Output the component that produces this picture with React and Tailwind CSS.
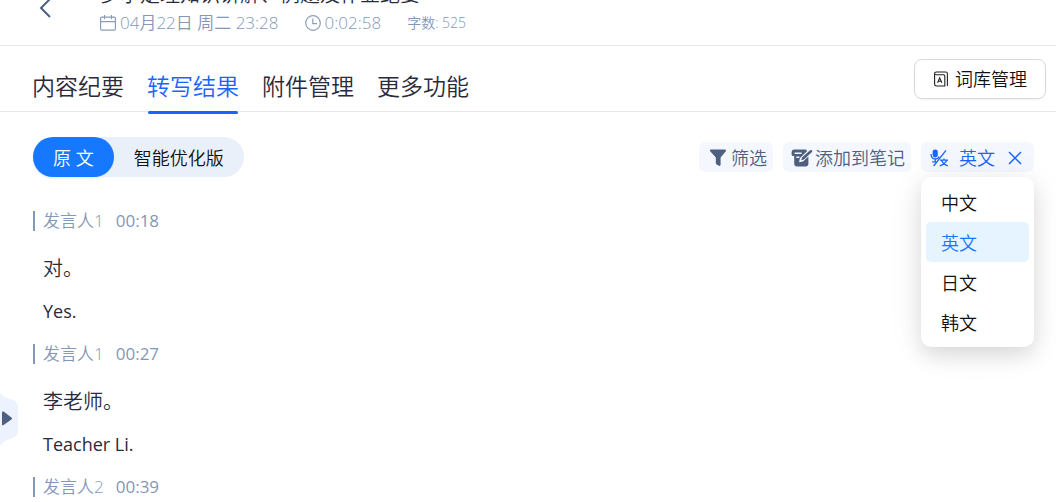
import React, { useState } from 'react'

const tabs = ['内容纪要', '转写结果', '附件管理', '更多功能']
const languages = ['中文', '英文', '日文', '韩文']

const segments = [
  { speaker: '发言人1', time: '00:18', text: '对。', translation: 'Yes.' },
  { speaker: '发言人1', time: '00:27', text: '李老师。', translation: 'Teacher Li.' },
  { speaker: '发言人2', time: '00:39' },
]

function BackIcon() {
  return (
    <svg width="14" height="22" viewBox="0 0 14 22" fill="none" stroke="#4d6080" strokeWidth="2">
      <path d="M12 2 L3 11 L12 20" />
    </svg>
  )
}

function CalendarIcon() {
  return (
    <svg width="16" height="16" viewBox="0 0 16 16" fill="none" stroke="#8c9dba" strokeWidth="1.2">
      <rect x="0.6" y="2.1" width="14.8" height="13" rx="1" />
      <path d="M0.6 6.6 H15.4 M4.5 0 V4.2 M11.5 0 V4.2" />
    </svg>
  )
}

function ClockIcon() {
  return (
    <svg width="16" height="16" viewBox="0 0 16 16" fill="none" stroke="#8c9dba" strokeWidth="1.2">
      <circle cx="8" cy="8" r="7.3" />
      <path d="M7.8 3.6 V8.6 H12" />
    </svg>
  )
}

function DictionaryIcon() {
  return (
    <svg width="16" height="16" viewBox="0 0 16 16" fill="none" stroke="#222" strokeWidth="1.1">
      <path d="M1.6 2.6 V13 Q1.6 15 3.4 15 H11.8 V5.4 Q11.8 3.8 10.4 3.8 H3.2 Q1.6 3.8 1.6 2.4 Q1.6 1 3.4 1 H12.6 Q14.4 1 14.4 2.8 V15" />
      <path d="M4.6 11.8 L6.7 6.8 L8.8 11.8 M5.3 10.2 H8.1" />
    </svg>
  )
}

function FilterIcon() {
  return (
    <svg width="18" height="18" viewBox="0 0 18 18" fill="#4d6080">
      <path d="M1.6 0.6 H16.2 Q17.4 0.8 16.8 2.2 L11.6 8.4 V15.6 Q11.4 17.2 9.8 16.8 L7.4 15.2 Q6.8 14.8 6.8 14 V8.4 L1.2 2.2 Q0.4 0.8 1.6 0.6 Z" />
    </svg>
  )
}

function NoteIcon() {
  return (
    <svg width="22" height="18" viewBox="0 0 22 18">
      <path
        fill="#4d6080"
        d="M3 0.5 H14.4 Q16 0.6 16 2.2 L9 9 L8 13.2 L12 12.4 L17.4 7.4 V14.6 Q17.4 17.5 14.6 17.5 H6.2 Q3.2 17.5 3.2 14.6 V7 H2.2 Q0.6 7 0.6 5.4 V3 Q0.6 0.5 3 0.5 Z"
      />
      <path stroke="#f4f8fe" strokeWidth="1.4" d="M3.6 4.2 H10.6 M5.4 8.2 H8.4" />
      <path fill="#4d6080" d="M20.4 1 Q22 1.6 21 3 L13 10.4 L10.2 11.2 L11 8.6 L18.8 1.4 Q19.6 0.7 20.4 1 Z" />
    </svg>
  )
}

function TranslateIcon() {
  return (
    <svg width="19" height="18" viewBox="0 0 19 18" fill="none" stroke="#1766ff" strokeWidth="1.3">
      <rect x="2.6" y="0.4" width="5.2" height="8" rx="2.4" fill="#1766ff" stroke="none" />
      <path d="M1 5 Q1.2 10 5.2 10 Q8 10 9.2 7.4 M5.2 10 V12.8 M2.2 12.8 H6" />
      <path d="M16 1.4 L3.6 17" />
      <path d="M10 11.2 H18 M14 9.4 V11.2 M11.6 11.4 Q13 15 17.8 16.8 M16.6 11.4 Q15 15 9.8 16.8" />
    </svg>
  )
}

function Segment({ speaker, time, text, translation }) {
  return (
    <article>
      <div className="flex h-5 items-center gap-3 border-l-2 border-[#8497b8] pl-2 text-[17px] leading-5 text-[#8497b8]">
        <span>{speaker}</span>
        <time className="font-normal">{time}</time>
      </div>
      {text && <p className="mt-3 px-2.5 text-[20px] leading-[52px] text-[#2b2a3a]">{text}</p>}
      {translation && (
        <p className="px-2.5 pb-2.5 text-[18px] font-normal leading-8 text-[#2b2a3a]">{translation}</p>
      )}
    </article>
  )
}

export default function App() {
  const [activeTab, setActiveTab] = useState('转写结果')
  const [version, setVersion] = useState('原文')
  const [language, setLanguage] = useState('英文')
  const [menuOpen, setMenuOpen] = useState(true)

  return (
    <div className="relative h-screen overflow-hidden bg-white font-['Open_Sans','Noto_Sans_CJK_SC',sans-serif] font-[350]">
      <header className="flex h-[46px] items-end overflow-hidden border-b border-[#e8e8ec] pl-[38px]">
        <button type="button" aria-label="返回" className="mb-[26px] mr-12">
          <BackIcon />
        </button>
        <div className="pb-2">
          <h1 className="text-[20px] leading-7 text-[#2b2a3a]">罗尔定理知识讲解、例题及作业纪要</h1>
          <div className="flex items-center text-[17px] leading-7 text-[#8497b8]">
            <span className="flex items-center gap-1">
              <CalendarIcon />
              04月22日 周二 23:28
            </span>
            <span className="ml-[26px] flex items-center gap-1">
              <ClockIcon />
              0:02:58
            </span>
            <span className="ml-[26px] text-[14px]">字数: 525</span>
          </div>
        </div>
      </header>

      <div className="flex h-[66px] items-stretch justify-between border-b border-[#e8e8ec] pl-8 pr-2.5">
        <nav className="flex gap-[23px]">
          {tabs.map((tab) => (
            <button
              key={tab}
              type="button"
              onClick={() => setActiveTab(tab)}
              className={`relative pt-4 text-[23px] ${
                tab === activeTab ? 'text-[#1766ff]' : 'text-[#2b2a3a]'
              }`}
            >
              {tab}
              {tab === activeTab && (
                <span className="absolute inset-x-px -bottom-[3px] h-[3px] rounded-full bg-[#1766ff]" />
              )}
            </button>
          ))}
        </nav>
        <button
          type="button"
          className="mt-[13px] flex h-10 items-center gap-1.5 rounded-lg border border-[#d9d9d9] px-[18px] text-[18px] text-[#111] shadow-xs"
        >
          <DictionaryIcon />
          词库管理
        </button>
      </div>

      <main className="pl-[33px] pr-[22px] pt-[25px]">
        <div className="flex items-center justify-between">
          <div className="flex rounded-full bg-[#e9f0f9] text-[18px]">
            {['原文', '智能优化版'].map((item) => (
              <button
                key={item}
                type="button"
                onClick={() => setVersion(item)}
                className={`h-10 rounded-full px-5 pt-0.5 ${
                  item === version
                    ? 'bg-[#1677ff] text-white shadow-sm shadow-blue-100'
                    : 'text-[#111]'
                }`}
              >
                {item === '原文' ? '原 文' : item}
              </button>
            ))}
          </div>

          <div className="flex gap-2.5 text-[18px] text-[#4d6080]">
            <button type="button" className="flex h-[30px] items-center gap-1 rounded-md bg-[#f4f8fe] pl-2.5 pr-1.5 pt-0.5">
              <FilterIcon />
              筛选
            </button>
            <button type="button" className="flex h-[30px] items-center gap-0.5 rounded-md bg-[#f4f8fe] pl-2 pr-1.5 pt-0.5">
              <NoteIcon />
              添加到笔记
            </button>
            <div className="relative">
              <div className="flex h-[30px] w-[113px] items-center rounded-md bg-[#f4f8fe] pl-[9px] pt-0.5 text-[#1766ff]">
                <button
                  type="button"
                  aria-haspopup="menu"
                  aria-expanded={menuOpen}
                  onClick={() => setMenuOpen(!menuOpen)}
                  className="flex items-center gap-2.5"
                >
                  <TranslateIcon />
                  {language}
                </button>
                <button type="button" aria-label="关闭翻译" onClick={() => setMenuOpen(false)} className="ml-3">
                  <svg width="16" height="16" viewBox="0 0 16 16" stroke="#1766ff" strokeWidth="1.5">
                    <path d="M2 2 L14 14 M14 2 L2 14" />
                  </svg>
                </button>
              </div>
              {menuOpen && (
                <div
                  role="menu"
                  className="absolute inset-x-0 top-[35px] z-10 flex flex-col rounded-[10px] bg-white p-[5px] shadow-[0_8px_20px_rgba(0,0,0,0.12),0_4px_40px_rgba(0,0,0,0.06)]"
                >
                  {languages.map((item) => (
                    <button
                      key={item}
                      type="button"
                      role="menuitem"
                      onClick={() => setLanguage(item)}
                      className={`h-10 rounded-[5px] px-[15px] pt-0.5 text-left ${
                        item === language ? 'bg-[#e6f4ff] text-[#1677ff]' : 'text-[#111]'
                      }`}
                    >
                      {item}
                    </button>
                  ))}
                </div>
              )}
            </div>
          </div>
        </div>

        <section className="mt-[34px] flex flex-col gap-[7px]">
          {segments.map((segment) => (
            <Segment key={segment.time} {...segment} />
          ))}
        </section>
      </main>

      <button type="button" aria-label="展开侧栏" className="absolute left-0 top-[392px]">
        <svg width="18" height="54" viewBox="0 0 18 54">
          <path fill="#ecf3ff" d="M0 0 Q2 4 7 6 L13 8 Q18 10 18 15 V39 Q18 44 13 46 L7 48 Q2 50 0 54 Z" />
          <path fill="#4d6080" d="M2 20.5 Q2 19 3.6 19.6 L11.4 25.4 Q12.6 26.4 11.4 27.4 L3.6 33 Q2 33.8 2 32.4 Z" />
        </svg>
      </button>
    </div>
  )
}
